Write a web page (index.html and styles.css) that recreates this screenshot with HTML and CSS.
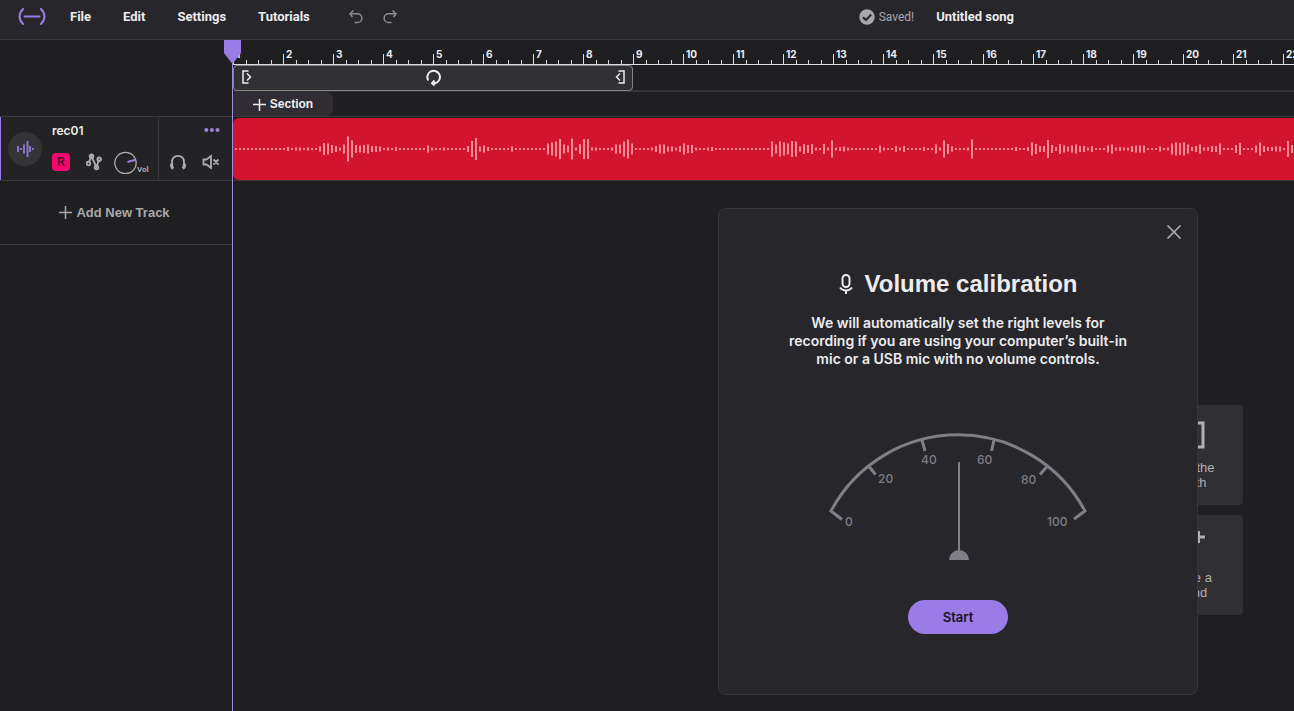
FILE: index.html
```html
<!DOCTYPE html>
<html lang="en">
<head>
<meta charset="utf-8">
<title>Untitled song</title>
<link rel="stylesheet" href="styles.css">
</head>
<body>
<div class="app">
  <header class="topbar">
    <svg class="logo" width="28" height="18" viewBox="0 0 28 18" aria-hidden="true"><path d="M5 1C.4 5.500.4 11.500 5 16M23 1c4.600 4.500 4.600 10.500 0 15M6.500 8.500h15" /></svg>
    <nav class="menu">
      <button>File</button>
      <button>Edit</button>
      <button>Settings</button>
      <button>Tutorials</button>
    </nav>
    <div class="history">
      <button aria-label="Undo"><svg width="16" height="16" viewBox="0 0 16 16"><path d="M5.500 1.500 2 4.800 4.500 8M2.200 4.800H9.500a4.300 4.300 0 0 1 0 8.700H6.500"/></svg></button>
      <button aria-label="Redo"><svg width="16" height="16" viewBox="0 0 16 16"><path d="M10.500 1.500 14 4.800 11.500 8M13.800 4.800H6.500a4.300 4.300 0 0 0 0 8.700H9.500"/></svg></button>
    </div>
    <div class="song">
      <span class="saved"><svg width="16" height="16" viewBox="0 0 16 16" aria-hidden="true"><circle cx="8" cy="8" r="7.700"/><path d="M4 8.200 7 11l5.200-5.500"/></svg>Saved!</span>
      <button class="song-name">Untitled song</button>
    </div>
  </header>

  <main class="workspace">
    <aside class="tracks">
      <div class="tracks-head"></div>
      <section class="track">
        <div class="track-main">
          <span class="track-icon"><svg width="18" height="18" viewBox="0 0 18 18" aria-hidden="true"><path d="M2 6v6M5 8v2M8 4.500v9M11.500 1v16M14 6v6M17 8v2"/></svg></span>
          <div class="track-info">
            <h2 class="track-name">rec01</h2>
            <div class="track-tools">
              <button class="arm">R</button>
              <button class="tool" aria-label="Automation"><svg width="16" height="18" viewBox="0 0 16 18"><path d="M2.700 9.500 5.500 3.500 10.500 14 13 6.500"/><circle cx="2.500" cy="10.500" r="1.800"/><circle cx="5.500" cy="3.300" r="1.800"/><circle cx="10.500" cy="14.500" r="1.800"/><circle cx="13.200" cy="6.300" r="1.800"/></svg></button>
              <button class="volume"><svg width="23" height="24" viewBox="0 0 23 24" aria-hidden="true"><circle cx="11.500" cy="13" r="10.700"/><path d="m13.500 12 8-2.200"/></svg><span>Vol</span></button>
            </div>
          </div>
        </div>
        <div class="track-side">
          <button class="more" aria-label="More"><svg width="16" height="4" viewBox="0 0 16 4"><circle cx="2.300" cy="2" r="2"/><circle cx="7.900" cy="2" r="2"/><circle cx="13.500" cy="2" r="2"/></svg></button>
          <div class="side-tools">
            <button class="tool" aria-label="Solo"><svg width="16" height="16" viewBox="0 0 16 16"><path d="M2 12V9C1.500 4.500 4.500 1.800 8 1.800S14.500 4.500 14 9v3"/><path class="cup" d="M2.300 9.500c-1 1.500-1 3.500 1 5M13.700 9.500c1 1.500 1 3.500-1 5"/></svg></button>
            <button class="tool" aria-label="Mute"><svg width="18" height="16" viewBox="0 0 18 16"><path d="M1.500 5.500h3L9 2v12L4.500 10.500h-3zM11.500 5.500l5 5M16.500 5.500l-5 5"/></svg></button>
          </div>
        </div>
      </section>
      <button class="add-track"><svg width="13" height="13" viewBox="0 0 13 13" aria-hidden="true"><path d="M6.500 0v13M0 6.500h13"/></svg>Add New Track</button>
    </aside>

    <section class="timeline">
      <div class="ruler" id="ruler"></div>
      <div class="loop-row">
        <div class="loop">
          <button aria-label="Loop start"><svg width="10" height="14" viewBox="0 0 10 14"><path d="M6.500 1H1v12h5.500M5 3.500 8.500 7 5 10.500"/></svg></button>
          <button aria-label="Toggle loop"><svg class="loop-icon" width="16" height="17" viewBox="0 0 16 17"><path d="M2.400 11.500A6.300 6.300 0 1 1 9 14.200H6M8.500 11.500 6 14.200l2.500 2.300"/></svg></button>
          <button aria-label="Loop end"><svg width="10" height="14" viewBox="0 0 10 14"><path d="M3.500 1H9v12H3.500M5 3.500 1.500 7 5 10.500"/></svg></button>
        </div>
      </div>
      <div class="section-row">
        <button class="add-section"><svg width="13" height="13" viewBox="0 0 13 13" aria-hidden="true"><path d="M6.500 1v12M0 6.500h13"/></svg>Section</button>
      </div>
      <div class="lane"><div class="clip"><svg class="wave" id="wave" width="1064" height="30" viewBox="0 0 1064 30" aria-hidden="true"></svg></div></div>
    </section>
    <div class="playhead"><svg width="17" height="24" viewBox="0 0 17 24" aria-hidden="true"><path d="M0 0h17v13L8.500 24 0 13z"/></svg></div>
  </main>

  <div class="tips">
    <button class="tip"><svg width="24" height="28" viewBox="0 0 24 28" aria-hidden="true"><path d="M8 2H2v24h6M16 2h6v24h-6"/></svg><span>Play the<br>synth</span></button>
    <button class="tip"><svg width="24" height="28" viewBox="0 0 24 28" aria-hidden="true"><path d="M17.500 0v12M10 6h14"/></svg><span>Invite a<br>friend</span></button>
  </div>

  <div class="dialog" role="dialog" aria-labelledby="dialog-title">
    <button class="close" aria-label="Close"><svg width="14" height="14" viewBox="0 0 14 14"><path d="m.5.500 13 13M13.500.500l-13 13"/></svg></button>
    <h1 class="dialog-title"><svg width="14" height="20" viewBox="0 0 14 20" aria-hidden="true"><rect x="3.500" y="1" width="7" height="12" rx="3.500"/><path d="M1 13.500c3 4 9 4 12 0M7 16.500V20"/></svg><span id="dialog-title">Volume calibration</span></h1>
    <p class="dialog-text">We will automatically set the right levels for<br>recording if you are using your computer’s built-in<br>mic or a USB mic with no volume controls.</p>
    <svg class="gauge" width="260" height="130" viewBox="0 0 260 130" role="img" aria-label="Input level">
      <path class="arc" d="m14 88.500-11-8.500A144 144 0 0 1 257 80l-11 8M41 35.500l6.500 8M94 9l3 11M166 9l-2.500 11M219 35.500l-7 8"/>
      <path class="needle" d="M131 31v89"/>
      <path class="hub" d="M121 129a10 10 0 0 1 20 0z"/>
      <text x="17" y="95">0</text><text x="50" y="52">20</text><text x="93" y="33">40</text><text x="149" y="33">60</text><text x="193" y="53">80</text><text x="219" y="95">100</text>
    </svg>
    <button class="start">Start</button>
  </div>
</div>
<script src="app.js"></script>
</body>
</html>
```
FILE: styles.css
```css
* { box-sizing: border-box; }
html, body { height: 100%; margin: 0; }
body {
  background: #1f1f21;
  color: #ececee;
  font: 600 13px/16px Inter, "Liberation Sans", sans-serif;
  overflow: hidden;
}
button {
  margin: 0; padding: 0; border: 0;
  background: none; color: inherit; font: inherit;
}
svg { display: block; flex: none; fill: none; stroke: currentColor; }
.app { position: relative; display: flex; flex-direction: column; min-height: 100vh; }

.topbar {
  display: flex; align-items: center;
  height: 40px; padding: 0 18px 6px;
  background: #27262b; border-bottom: 1px solid #39393c;
}
.logo { color: #9b7be6; stroke-width: 2; stroke-linecap: round; }
.menu { display: flex; gap: 32px; margin-left: 24px; font: 700 13px/16px Roboto, sans-serif; }
.history { display: flex; gap: 18px; margin-left: 38px; color: #8c8b90; }
.history svg { stroke-width: 1.500; }
.song { display: flex; align-items: center; gap: 22px; margin: 0 262px 0 auto; font: 700 13px/16px Roboto, sans-serif; }
.saved { display: flex; align-items: center; gap: 4px; color: #a7a6ab; font-size: 12px; font-weight: 400; }
.saved circle { fill: #a7a6ab; stroke: none; }
.saved path { stroke: #27262b; stroke-width: 2; }

.workspace { position: relative; display: grid; grid-template-columns: 232px 1fr; flex: 1; }
.tracks { min-width: 0; }
.tracks-head { height: 76px; }
.track {
  display: grid; grid-template-columns: 158px 1fr;
  height: 65px;
  background: #232325;
  border: solid #39393c; border-width: 1px 0;
  box-shadow: inset 1px 0 #9b7be6;
}
.track-main { display: flex; gap: 10px; padding: 6px 0 0 8px; }
.track-icon {
  display: flex; align-items: center; justify-content: center;
  width: 34px; height: 34px; margin-top: 9px; border-radius: 50%;
  background: #343336; color: #8974ca;
}
.track-icon svg { stroke-width: 2; }
.track-name { margin: 0; font: 600 12px/16px Inter, sans-serif; }
.track-tools { display: flex; align-items: center; gap: 16px; height: 24px; margin-top: 11px; }
.arm { width: 18px; height: 18px; border-radius: 4px; background: #f5056e; color: #3a0a24; font: 500 12px/18px Inter, sans-serif; }
.tool { color: #adacaf; }
.tool svg { stroke-width: 1.800; }
.tool .cup { stroke-width: 3; }
.volume { display: flex; align-items: flex-end; margin-left: -4px; color: #adacaf; font: 700 8px/8px Roboto, sans-serif; }
.volume circle { stroke-width: 1.200; }
.volume path { stroke: #9b7be6; stroke-width: 2; }
.track-side { display: flex; flex-direction: column; justify-content: space-between; border-left: 1px solid #39393c; padding: 11px 12px 10px 11px; }
.more { align-self: flex-end; color: #9b82dc; }
.more svg { fill: currentColor; stroke: none; }
.side-tools { display: flex; justify-content: space-between; }
.add-track {
  display: flex; align-items: center; justify-content: center; gap: 4px;
  width: 100%; height: 64px; padding-right: 3px;
  border-bottom: 1px solid #39393c; color: #a9a8ab;
  font: 700 13px/16px "Liberation Sans", sans-serif;
}
.add-track svg, .add-section svg { stroke-width: 1.500; }

.timeline { display: flex; flex-direction: column; min-width: 0; padding-left: 1px; overflow: hidden; }
.ruler { display: flex; height: 25px; border-bottom: 1px solid #dcdcde; overflow: hidden; }
.bar {
  flex: none; width: 50px; margin-top: 8px; padding-left: 3px;
  font: 700 10px/12px Inter, sans-serif;
  background:
    linear-gradient(#dcdcde, #dcdcde) 0 6px / 1px 10px no-repeat,
    linear-gradient(#dcdcde, #dcdcde) 13px 12px / 1px 4px no-repeat,
    linear-gradient(#dcdcde, #dcdcde) 25px 12px / 1px 4px no-repeat,
    linear-gradient(#dcdcde, #dcdcde) 38px 12px / 1px 4px no-repeat;
}
.loop-row { height: 27px; border-bottom: 2px solid #343437; }
.loop {
  display: flex; align-items: center; justify-content: space-between;
  width: 400px; height: 26px; padding: 0 7px 2px 8px;
  background: #313133; border: 1px solid #858588; border-radius: 4px;
}
.loop svg { stroke-width: 1.500; }
.loop .loop-icon { stroke-width: 2; }
.section-row { height: 24px; }
.add-section {
  display: flex; align-items: center; justify-content: center; gap: 4px;
  width: 100px; height: 24px; border-radius: 4px 6px 6px 4px;
  background: #2f2d33; font: 700 12px/16px "Liberation Sans", sans-serif;
}
.lane { height: 65px; padding: 1px 0; border-top: 1px solid #39393c; border-bottom: 1px solid #39393c; }
.clip {
  display: flex; align-items: center;
  height: 62px; overflow: hidden;
  background: #d3142f; border-radius: 6px 0 0 6px;
}
.wave { stroke: #f68a97; stroke-width: 2; }
.playhead {
  position: absolute; top: 0; bottom: 0; left: 224px; width: 17px;
  background: linear-gradient(#a58be0, #a58be0) 8px 0 / 1px 100% no-repeat;
}
.playhead svg { fill: #9b7be6; stroke: none; }

.tips { position: absolute; top: 405px; right: 51px; display: grid; gap: 10px; }
.tip {
  display: flex; flex-direction: column; align-items: center; gap: 11px;
  width: 100px; height: 100px; padding-top: 16px;
  border-radius: 4px; background: #303032; color: #b0afb2;
  font: 400 13px/15px "Liberation Sans", sans-serif;
}
.tip span { padding-right: 4px; }
.tip svg { stroke-width: 3; }

.dialog {
  position: absolute; top: 208px; right: 96px;
  display: flex; flex-direction: column; align-items: center;
  width: 480px; padding: 16px 16px 60px;
  background: #27262b; border: 1px solid #353538; border-radius: 8px;
}
.close { align-self: flex-end; color: #b5b4b8; }
.close svg { stroke-width: 1.500; }
.dialog-title { display: flex; align-items: center; gap: 12px; margin: 29px 0 0; font: 700 24px/32px "Liberation Sans", sans-serif; }
.dialog-title svg { stroke-width: 2; }
.dialog-text { margin: 14px 0 0; text-align: center; font: 600 14px/18px Inter, sans-serif; }
.gauge { margin-top: 63px; color: #807f85; }
.arc { stroke-width: 3; }
.needle { stroke-width: 2; }
.hub { fill: currentColor; stroke: none; }
.gauge text { fill: currentColor; stroke: none; font: 500 12px Inter, sans-serif; }
.start { width: 100px; height: 34px; margin-top: 39px; border-radius: 17px; background: #9b7be6; color: #17121f; }
```
FILE: app.js
```js
const levels = [
  2,2,2,2,2,2,2,2,2,2,2,2,2,4,2,3,3,2,3,2,2,5,12,11,8,6,3,9,25,17,8,7,8,9,6,6,5,2,3,2,
  4,2,2,2,2,2,2,2,7,3,2,2,3,2,2,2,2,2,6,16,22,5,7,4,2,2,2,2,2,5,2,2,2,2,2,2,2,2,11,13,
  15,20,9,7,21,3,10,20,20,3,3,2,2,2,3,9,9,15,19,11,2,2,2,2,3,6,9,9,5,5,3,6,11,8,8,3,2,2,3,4,
  2,2,2,2,2,2,2,2,2,2,2,2,2,2,15,9,15,13,11,16,15,5,10,8,10,3,2,10,3,17,3,4,5,3,2,2,2,2,2,2,
  2,7,3,2,2,6,3,6,2,2,2,2,4,2,2,9,3,17,10,5,2,2,2,3,19,2,2,2,2,2,2,2,2,2,2,4,2,2,4,13,
  10,6,6,18,8,4,10,7,5,7,9,6,6,3,6,2,2,2,7,9,3,4,3,3,6,7,7,7,2,2,2,5,2,3,11,13,12,13,9,4,
  6,9,3,4,6,6,11,2,2,2,8,12,2,2,2,7,13,6,4,4,5,5,2,16,8
];
const path = document.createElementNS("http://www.w3.org/2000/svg", "path");
path.setAttribute("d", levels.map((h, i) => `M${3 + i * 4} ${15 - h / 2}v${h}`).join(""));
document.getElementById("wave").append(path);

const ruler = document.getElementById("ruler");
const bars = Math.ceil(ruler.clientWidth / 50);
for (let n = 1; n <= bars; n++) {
  const bar = document.createElement("div");
  bar.className = "bar";
  bar.textContent = n;
  ruler.append(bar);
}
```
